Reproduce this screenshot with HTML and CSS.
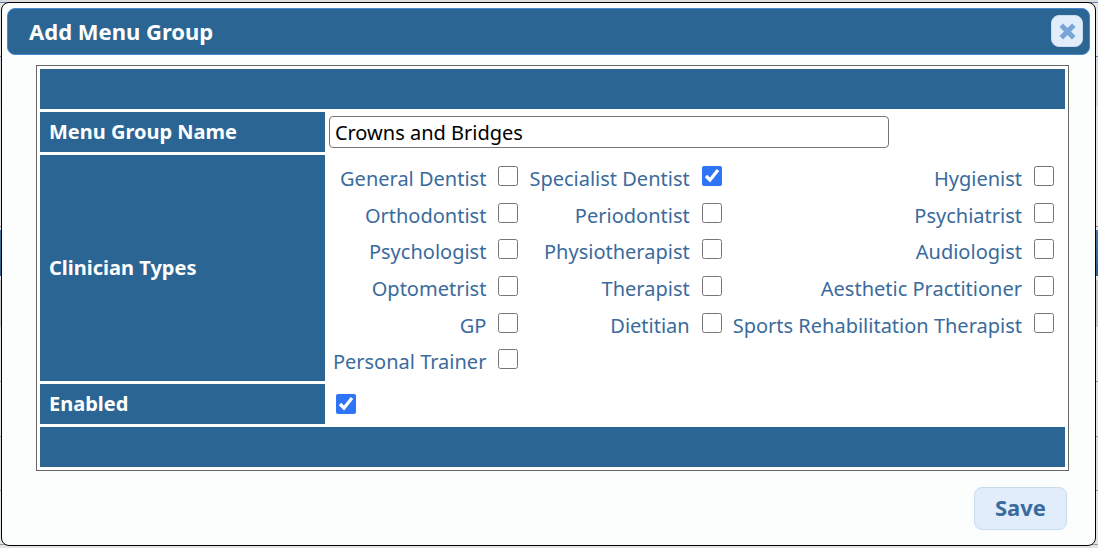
FILE: index.html
```html
<!DOCTYPE html>
<html lang="en">
<head>
    <meta charset="UTF-8">
    <meta name="viewport" content="width=device-width, initial-scale=1.0">
    <title>Add Menu Group</title>
    <link rel="stylesheet" href="styles.css">
</head>
<body>

<form class="dialog" role="dialog" aria-labelledby="dialogTitle">
    <div class="titlebar">
        <h2 id="dialogTitle">Add Menu Group</h2>
        <button type="button" class="close" aria-label="Close">
            <svg width="18" height="18" viewBox="0 0 18 18" aria-hidden="true">
                <path d="M5 5L14 14M14 5L5 14"/>
            </svg>
        </button>
    </div>

    <div class="content">
        <table class="form-table">
            <tr>
                <td class="band" colspan="2"></td>
            </tr>
            <tr>
                <th scope="row"><label for="groupName">Menu Group Name</label></th>
                <td><input type="text" id="groupName" class="text" value="Crowns and Bridges"></td>
            </tr>
            <tr>
                <th scope="row" id="typesLabel">Clinician Types</th>
                <td>
                    <div class="types" role="group" aria-labelledby="typesLabel">
                        <label>General Dentist <input type="checkbox"></label>
                        <label>Specialist Dentist <input type="checkbox" checked></label>
                        <label>Hygienist <input type="checkbox"></label>
                        <label>Orthodontist <input type="checkbox"></label>
                        <label>Periodontist <input type="checkbox"></label>
                        <label>Psychiatrist <input type="checkbox"></label>
                        <label>Psychologist <input type="checkbox"></label>
                        <label>Physiotherapist <input type="checkbox"></label>
                        <label>Audiologist <input type="checkbox"></label>
                        <label>Optometrist <input type="checkbox"></label>
                        <label>Therapist <input type="checkbox"></label>
                        <label>Aesthetic Practitioner <input type="checkbox"></label>
                        <label>GP <input type="checkbox"></label>
                        <label>Dietitian <input type="checkbox"></label>
                        <label>Sports Rehabilitation Therapist <input type="checkbox"></label>
                        <label>Personal Trainer <input type="checkbox"></label>
                    </div>
                </td>
            </tr>
            <tr>
                <th scope="row"><label for="enabled">Enabled</label></th>
                <td class="enabled"><input type="checkbox" id="enabled" checked></td>
            </tr>
            <tr>
                <td class="band" colspan="2"></td>
            </tr>
        </table>
    </div>

    <div class="buttons">
        <button type="button" class="save">Save</button>
    </div>
</form>

</body>
</html>
```
FILE: styles.css
```css
* {
    box-sizing: border-box;
}
body {
    margin: 0;
    padding: 2px 2px 2px 1px;
    min-height: 100vh;
    display: flex;
    font-family: "Noto Sans", "Open Sans", sans-serif;
    font-size: 20px;
    line-height: 24px;
    color: #3a6b9c;
    background: linear-gradient(#dcdcdc 2px, #5b86b3 2px, #5b86b3 3px, #e6e6e6 3px, #e6e6e6 56px, #5b86b3 56px, #5b86b3 57px, #d8d9de 57px, #d8d9de 106px, #e4e4e4 106px, #e4e4e4 226px, #888 226px, #888 227px, #e4e4e4 227px, #e4e4e4 230px, #4a769f 230px, #2f5f91 276px, #e4e4e4 276px, #e4e4e4 280px, #c8c8c8 280px, #c8c8c8 327px, #e4e4e4 327px, #e4e4e4 381px, #999 381px, #999 382px, #e4e4e4 382px, #e4e4e4 436px, #999 436px, #999 437px, #dcdcdc 437px, #dcdcdc 490px, #999 490px, #999 491px, #e4e4e4 491px, #e4e4e4 544px, #999 544px, #999 545px, #e4e4e4 545px);
}
.dialog {
    flex: 1;
    display: flex;
    flex-direction: column;
    padding: 5px;
    border: 1px solid #000;
    border-radius: 8px;
    background-color: #fcfefe;
}
.titlebar {
    display: flex;
    justify-content: space-between;
    align-items: center;
    height: 47px;
    padding: 0 6px 2px 21px;
    border: 1px solid #4888cc;
    border-radius: 8px;
    background-color: #2b6593;
    color: #fff;
}
h2 {
    margin: 0;
    font-size: 22px;
}
button {
    border: 1px solid #c8daee;
    border-radius: 8px;
    background-color: #e1edfb;
    cursor: pointer;
}
.close {
    display: flex;
    justify-content: center;
    align-items: center;
    width: 32px;
    height: 32px;
    padding: 0;
}
.close path {
    fill: none;
    stroke: #79a5d6;
    stroke-width: 5;
    stroke-linecap: square;
}
.content {
    padding: 10px 21px 0 29px;
}
.form-table {
    width: 100%;
    border: 1px solid #666;
    border-spacing: 3px;
    background-color: #fff;
}
.form-table th, .form-table td {
    height: 40px;
    padding: 0;
}
.form-table th {
    width: 285px;
    padding: 0 9px;
    background-color: #2b6593;
    color: #fff;
    text-align: left;
}
.form-table .band {
    background-color: #2b6593;
}
.text {
    display: block;
    width: 560px;
    max-width: 100%;
    height: 32px;
    margin-left: 1px;
    padding: 0 5px;
    border: 1px solid #767676;
    border-radius: 4px;
    background-color: #fff;
    font: inherit;
    color: #000;
}
input[type="checkbox"] {
    flex: none;
    width: 20px;
    height: 20px;
    margin: 0;
    accent-color: #3074f6;
}
.types {
    display: grid;
    grid-template-columns: 184fr 193fr 320fr;
    grid-template-rows: repeat(6, 1fr);
    column-gap: 11px;
    height: 226px;
    padding: 6px 11px 0 5px;
    line-height: 36px;
}
.types label {
    display: flex;
    justify-content: flex-end;
    align-items: baseline;
    gap: 12px;
    white-space: nowrap;
}
.form-table .enabled input {
    display: block;
    margin-left: 8px;
}
.buttons {
    display: flex;
    justify-content: flex-end;
    padding: 16px 23px 10px;
}
.save {
    width: 93px;
    height: 43px;
    padding: 0 0 3px;
    font-family: inherit;
    font-size: 22px;
    font-weight: bold;
    color: #3a6b9c;
}
```
